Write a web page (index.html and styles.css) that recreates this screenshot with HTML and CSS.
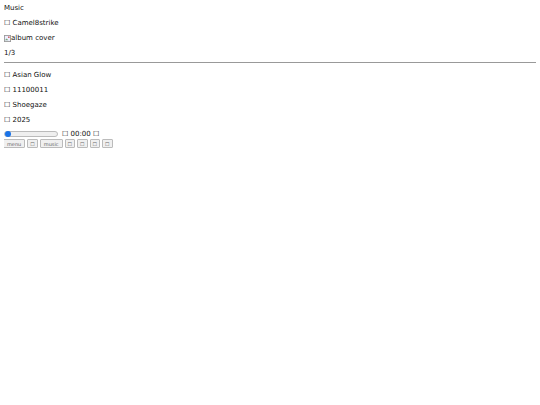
FILE: index.html
```html
<!DOCTYPE html>
<html lang="en">
<head>
    <meta charset="UTF-8">
    <meta name="viewport" content="width=device-width, initial-scale=1.0">
    <link rel="stylesheet" href="styles.css">
</head>
<body>
    <div class="title">Music</div>
    <p>&#9744; Camel8strike</p>
    <p class="cover">
        <svg class="broken" viewBox="0 0 8 8" width="7" height="7">
            <rect x="0.5" y="0.5" width="7" height="7" fill="#eef" stroke="#999" stroke-width="1"/>
            <path d="M1 6 L3 4 L5 6 Z" fill="#7a7"/>
            <circle cx="5.5" cy="2.5" r="1" fill="#c66"/>
        </svg>album cover
    </p>
    <p>1/3</p>
    <hr>
    <p>&#9744; Asian Glow</p>
    <p>&#9744; 11100011</p>
    <p>&#9744; Shoegaze</p>
    <p>&#9744; 2025</p>
    <div class="player">
        <input type="range" class="seek" min="0" max="100" value="0">
        <span>&#9744; 00:00 &#9744;</span>
    </div>
    <div class="controls">
        <button>menu</button>
        <button class="icon">&#9744;</button>
        <button>music</button>
        <button class="icon">&#9744;</button>
        <button class="icon">&#9744;</button>
        <button class="icon">&#9744;</button>
        <button class="icon">&#9744;</button>
    </div>
</body>
</html>
```

FILE: styles.css
```css
body {
    margin: 4px;
    font-family: 'DejaVu Sans', Verdana, sans-serif;
    font-size: 7px;
    color: #111;
    background: #fff;
}

.title {
    line-height: 8px;
}

p {
    margin: 7px 0;
    line-height: 8px;
}

.cover {
    display: flex;
    align-items: center;
}

hr {
    margin: -2px 0 8px;
    border: none;
    border-top: 1px solid #999;
}

.player {
    display: flex;
    align-items: center;
    gap: 4px;
    height: 8px;
    margin-top: -1px;
}

.seek {
    appearance: none;
    width: 52px;
    height: 4px;
    margin: 0;
    border: 1px solid #bbb;
    border-radius: 3px;
    background: #efefef;
}

.seek::-webkit-slider-thumb {
    appearance: none;
    width: 6px;
    height: 6px;
    border-radius: 50%;
    background: #1a73e8;
    border: none;
}

.controls {
    display: flex;
    gap: 2px;
    margin-top: 1px;
    margin-left: -1px;
}

button {
    font-family: 'DejaVu Sans', Verdana, sans-serif;
    font-size: 5px;
    line-height: 6px;
    padding: 1px 3px 0;
    border: 1px solid #bbb;
    border-radius: 1px;
    background: #f0f0f0;
    color: #666;
}

button.icon {
    padding: 1px 2px 0;
}
```
